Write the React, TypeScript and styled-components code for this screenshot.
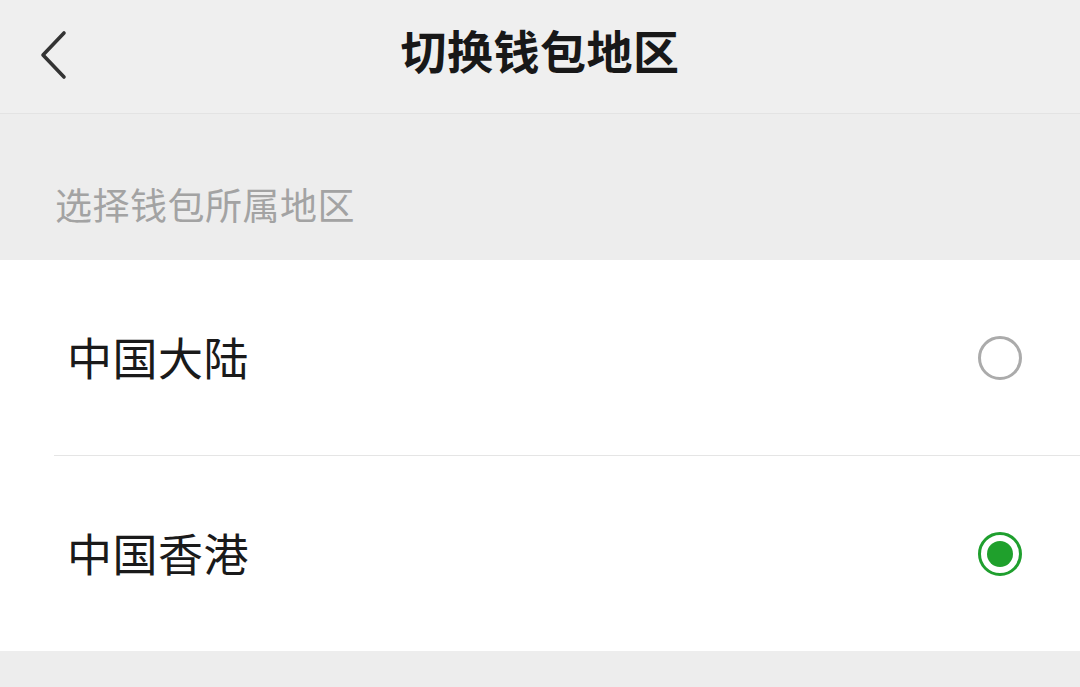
import styled, { createGlobalStyle } from 'styled-components';
import { useState } from 'react';

const GlobalStyle = createGlobalStyle`
	html, body {
		margin: 0;
		padding: 0;
		background: #ededed;
	}
	body {
		font-family: "Noto Sans CJK SC", "Noto Sans", sans-serif;
	}
`;

const Page = styled.div`
	width: 1080px;
	height: 687px;
	overflow: hidden;
	background: #ededed;
`;

const Header = styled.div`
	height: 113px;
	display: grid;
	grid-template-columns: 120px 1fr 120px;
	align-items: center;
	background: #efefef;
	border-bottom: 1px solid #e3e3e3;
`;

const BackButton = styled.button`
	display: flex;
	align-items: center;
	padding: 0 0 4px 36px;
	border: none;
	background: transparent;
	height: 100%;
	cursor: pointer;
`;

const Title = styled.h1`
	margin: 0 0 16px;
	text-align: center;
	font-size: 46px;
	font-weight: 700;
	color: #181818;
	letter-spacing: 0.5px;
`;

const SectionLabel = styled.div`
	height: 146px;
	box-sizing: border-box;
	padding: 71px 0 0 55px;
	font-size: 37px;
	line-height: 38px;
	color: #a3a3a3;
	letter-spacing: 0.5px;
`;

const List = styled.div`
	background: #fff;
`;

const Row = styled.div`
	height: 195px;
	display: flex;
	align-items: center;
	justify-content: space-between;
	padding: 0 58px 0 67px;
	cursor: pointer;
`;

const RowText = styled.span`
	font-size: 45px;
	color: #1a1a1a;
	letter-spacing: 0.5px;
	margin-top: -2px;
`;

const Divider = styled.div`
	height: 1px;
	margin-left: 54px;
	background: #e5e5e5;
`;

const Radio = styled.span<{ checked: boolean }>`
	width: 44px;
	height: 44px;
	box-sizing: border-box;
	border-radius: 50%;
	border: 3.5px solid ${({ checked }) => (checked ? '#1f9f2e' : '#ababab')};
	display: flex;
	align-items: center;
	justify-content: center;
`;

const Dot = styled.span`
	width: 26px;
	height: 26px;
	border-radius: 50%;
	background: #1fa02c;
`;

const regions = ['中国大陆', '中国香港'];

const App = () => {
	const [selected, setSelected] = useState('中国香港');
	return (
		<Page>
			<GlobalStyle />
			<Header>
				<BackButton aria-label="返回">
					<svg width="34" height="50" viewBox="0 0 34 50">
						<path d="M28 3 L7 25 L28 47" fill="none" stroke="#333" strokeWidth="3.6" strokeLinecap="round" strokeLinejoin="round" />
					</svg>
				</BackButton>
				<Title>切换钱包地区</Title>
				<div />
			</Header>
			<SectionLabel>选择钱包所属地区</SectionLabel>
			<List>
				{regions.map((name, i) => (
					<div key={name}>
						{i > 0 && <Divider />}
						<Row onClick={() => setSelected(name)}>
							<RowText>{name}</RowText>
							<Radio checked={selected === name}>{selected === name && <Dot />}</Radio>
						</Row>
					</div>
				))}
			</List>
		</Page>
	);
};

export default App;
